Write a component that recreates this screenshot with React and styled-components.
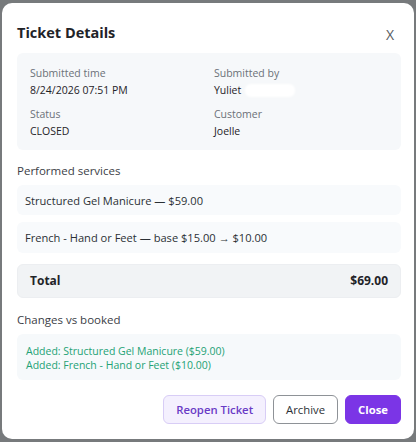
import React from "react";
import styled, { createGlobalStyle } from "styled-components";

const Global = createGlobalStyle`
  html, body {
    margin: 0;
    padding: 0;
    background: #777a7c;
    font-family: "Open Sans", "Noto Sans", sans-serif;
  }
`;

const Backdrop = styled.div`
  width: 416px;
  height: 442px;
  padding: 3px 2px 0 2px;
  box-sizing: border-box;
`;

const Modal = styled.div`
  background: #ffffff;
  border-radius: 10px;
  padding: 18px 13px 15px 15px;
  box-sizing: border-box;
  width: 412px;
  height: 436px;
  display: flex;
  flex-direction: column;
`;

const Header = styled.div`
  display: flex;
  justify-content: space-between;
  align-items: center;
  margin-bottom: 9px;
`;

const Title = styled.h2`
  margin: 0;
  font-size: 14.5px;
  line-height: 22px;
  font-weight: 700;
  color: #1f2328;
`;

const CloseX = styled.button`
  border: none;
  background: none;
  padding: 0;
  margin: 4px 7px 0 0;
  font-family: inherit;
  font-size: 14px;
  color: #555a60;
  cursor: pointer;
`;

const InfoBox = styled.div`
  background: #f6f8fa;
  border-radius: 6px;
  padding: 13px 13px 12px 13px;
  display: grid;
  grid-template-columns: 184px 1fr;
  row-gap: 10px;
`;

const Field = styled.div`
  display: flex;
  flex-direction: column;
  gap: 3px;
`;

const Label = styled.span`
  font-size: 10.5px;
  line-height: 14px;
  color: #6b7178;
`;

const Value = styled.span`
  font-size: 10.5px;
  line-height: 14px;
  color: #1f2328;
  display: flex;
  align-items: center;
`;

const Redact = styled.span`
  display: inline-block;
  width: 50px;
  height: 13px;
  margin-left: 4px;
  border-radius: 6px;
  background: #ffffff;
  filter: blur(1px);
`;

const SectionTitle = styled.div`
  margin-top: ${(p) => p.$top}px;
  margin-bottom: 7px;
  font-size: 11.5px;
  line-height: 14px;
  color: #3b4046;
`;

const ServiceRow = styled.div`
  background: #f8fafc;
  border-radius: 6px;
  height: 31px;
  padding: 0 8px;
  display: flex;
  align-items: center;
  font-size: 11.1px;
  color: #2b3035;
  margin-bottom: 7px;
`;

const TotalRow = styled.div`
  margin-top: 4px;
  background: #f1f3f5;
  border: 1px solid #eceef1;
  border-radius: 6px;
  height: 35px;
  box-sizing: border-box;
  padding: 0 12px 0 12px;
  display: flex;
  justify-content: space-between;
  align-items: center;
  font-size: 12px;
  font-weight: 700;
  color: #1f2328;
`;

const ChangesBox = styled.div`
  background: #f6f9fb;
  border-radius: 6px;
  padding: 10px 9px 8px 9px;
  display: flex;
  flex-direction: column;
`;

const ChangeLine = styled.span`
  font-size: 10.5px;
  line-height: 14px;
  color: #23a275;
`;

const Actions = styled.div`
  margin-top: 15px;
  display: flex;
  justify-content: flex-end;
  gap: 7px;
`;

const Button = styled.button`
  height: 29px;
  padding: 0 ${(p) => p.$pad}px;
  border-radius: 6px;
  font-family: inherit;
  font-size: 11.3px;
  cursor: pointer;
  box-sizing: border-box;
  ${(p) =>
    p.$variant === "soft" &&
    `
    background: #f4f0fe;
    border: 1px solid #d8cdf6;
    color: #6a3bc6;
    font-weight: 600;
  `}
  ${(p) =>
    p.$variant === "outline" &&
    `
    background: #ffffff;
    border: 1px solid #8e9297;
    color: #2b3035;
    font-weight: 400;
  `}
  ${(p) =>
    p.$variant === "primary" &&
    `
    background: #7b35e6;
    border: 1px solid #7b35e6;
    color: #ffffff;
    font-weight: 700;
  `}
`;

export default function App() {
  return (
    <>
      <Global />
      <Backdrop>
        <Modal>
          <Header>
            <Title>Ticket Details</Title>
            <CloseX>X</CloseX>
          </Header>
          <InfoBox>
            <Field>
              <Label>Submitted time</Label>
              <Value>8/24/2026 07:51 PM</Value>
            </Field>
            <Field>
              <Label>Submitted by</Label>
              <Value>
                Yuliet
                <Redact />
              </Value>
            </Field>
            <Field>
              <Label>Status</Label>
              <Value>CLOSED</Value>
            </Field>
            <Field>
              <Label>Customer</Label>
              <Value>Joelle</Value>
            </Field>
          </InfoBox>

          <SectionTitle $top={14}>Performed services</SectionTitle>
          <ServiceRow>Structured Gel Manicure — $59.00</ServiceRow>
          <ServiceRow>French - Hand or Feet — base $15.00 → $10.00</ServiceRow>
          <TotalRow>
            <span>Total</span>
            <span>$69.00</span>
          </TotalRow>

          <SectionTitle $top={15}>Changes vs booked</SectionTitle>
          <ChangesBox>
            <ChangeLine>Added: Structured Gel Manicure ($59.00)</ChangeLine>
            <ChangeLine>Added: French - Hand or Feet ($10.00)</ChangeLine>
          </ChangesBox>

          <Actions>
            <Button $variant="soft" $pad={12}>Reopen Ticket</Button>
            <Button $variant="outline" $pad={12}>Archive</Button>
            <Button $variant="primary" $pad={12}>Close</Button>
          </Actions>
        </Modal>
      </Backdrop>
    </>
  );
}
